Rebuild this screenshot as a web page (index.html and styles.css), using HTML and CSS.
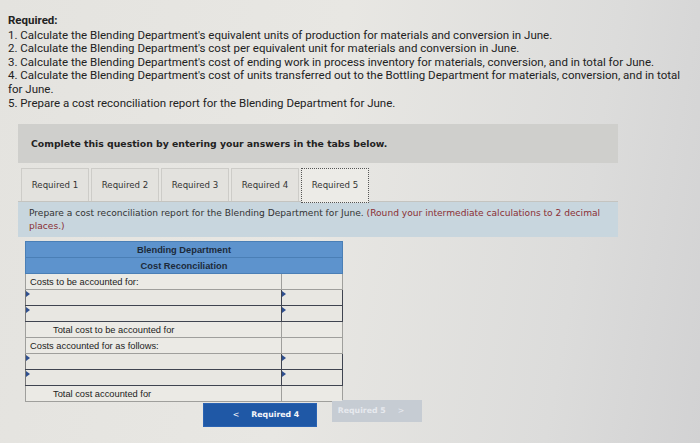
FILE: index.html
```html
<!DOCTYPE html>
<html>
<head>
<meta charset="utf-8">
<link rel="stylesheet" href="styles.css">
</head>
<body>
<div class="page">
  <div class="req">
    <div class="req-title">Required:</div>
    <div>1. Calculate the Blending Department's equivalent units of production for materials and conversion in June.</div>
    <div>2. Calculate the Blending Department's cost per equivalent unit for materials and conversion in June.</div>
    <div>3. Calculate the Blending Department's cost of ending work in process inventory for materials, conversion, and in total for June.</div>
    <div>4. Calculate the Blending Department's cost of units transferred out to the Bottling Department for materials, conversion, and in total for June.</div>
    <div>5. Prepare a cost reconciliation report for the Blending Department for June.</div>
  </div>

  <div class="card">
    <div class="banner">Complete this question by entering your answers in the tabs below.</div>
    <div class="tabs">
      <div class="tab">Required 1</div>
      <div class="tab">Required 2</div>
      <div class="tab">Required 3</div>
      <div class="tab">Required 4</div>
      <div class="tab active">Required 5</div>
    </div>
    <div class="panel">
      <div class="pline">Prepare a cost reconciliation report for the Blending Department for June. <span class="note">(Round your intermediate calculations to 2 decimal</span></div>
      <div class="pline note">places.)</div>
    </div>

    <table class="recon">
      <tr class="head"><td colspan="2">Blending Department</td></tr>
      <tr class="head"><td colspan="2">Cost Reconciliation</td></tr>
      <tr class="row"><td class="lbl">Costs to be accounted for:</td><td class="val"></td></tr>
      <tr class="inp"><td class="lbl"><span class="mark"></span></td><td class="val"><span class="mark"></span></td></tr>
      <tr class="inp"><td class="lbl"><span class="mark"></span></td><td class="val"><span class="mark"></span></td></tr>
      <tr class="row"><td class="lbl ind">Total cost to be accounted for</td><td class="val"></td></tr>
      <tr class="row"><td class="lbl">Costs accounted for as follows:</td><td class="val"></td></tr>
      <tr class="inp"><td class="lbl"><span class="mark"></span></td><td class="val"><span class="mark"></span></td></tr>
      <tr class="inp"><td class="lbl"><span class="mark"></span></td><td class="val"><span class="mark"></span></td></tr>
      <tr class="row"><td class="lbl ind">Total cost accounted for</td><td class="val"></td></tr>
    </table>

    <div class="nav">
      <div class="btn prev"><span class="chev">&lt;</span>Required 4</div>
      <div class="btn next">Required 5<span class="chev">&gt;</span></div>
    </div>
  </div>
</div>
</body>
</html>
```
FILE: styles.css
```css
html, body {
  margin: 0;
  padding: 0;
}
body {
  width: 700px;
  height: 443px;
  overflow: hidden;
  background: linear-gradient(100deg, #e4e3df 0%, #e8e7e3 45%, #dcdcdb 80%, #d2d2d3 100%);
}
.page {
  padding: 14px 0 0 8px;
}
.req {
  font-family: Roboto, "Liberation Sans", sans-serif;
  font-size: 11.5px;
  line-height: 13.6px;
  color: #222;
  width: 680px;
}
.req-title {
  font-weight: bold;
  margin-bottom: 1px;
}
.card {
  margin: 14px 0 0 10px;
  width: 600px;
}
.banner {
  background: #cfcfcc;
  height: 39px;
  line-height: 39px;
  padding-left: 13px;
  font-family: "DejaVu Sans", Verdana, sans-serif;
  font-weight: bold;
  font-size: 9.3px;
  color: #222;
}
.tabs {
  display: flex;
  gap: 2px;
  margin-top: 5px;
  padding-left: 3px;
  height: 33px;
  border-bottom: 1px solid #c4c4c0;
}
.tab {
  width: 66px;
  height: 32px;
  line-height: 32px;
  text-align: center;
  background: #e3e2de;
  border: 1px solid #cdccc8;
  border-bottom: none;
  font-family: "DejaVu Sans", Verdana, sans-serif;
  font-size: 8.6px;
  color: #333;
}
.tab.active {
  background: #ecebe7;
  border: 1px dotted #555;
  height: 33px;
}
.panel {
  background: #c8d6de;
  height: 26px;
  padding: 5px 11px 4px;
  font-family: "DejaVu Sans", Verdana, sans-serif;
  font-size: 9.1px;
  line-height: 13px;
  color: #333;
}
.pline {
  white-space: nowrap;
}
.note {
  color: #8a2f35;
}
.recon {
  margin: 4px 0 0 7px;
  border-collapse: collapse;
  width: 318px;
  font-family: "Liberation Sans", Arial, sans-serif;
  font-size: 9.3px;
  color: #222;
}
.recon td {
  padding: 0 4px;
  height: 15px;
  position: relative;
}
.head td {
  background: #5d93cd;
  text-align: center;
  font-weight: bold;
  border: 1px solid #4a7fb6;
  color: #1c2a3a;
}
.row td {
  background: #ebeae5;
  border: 1px solid #9f9f9c;
}
.row .val {
  width: 52px;
}
.lbl.ind {
  padding-left: 27px;
}
.inp td {
  background: #e8e7e2;
  border: 1.5px solid #3f4450;
}
.inp .lbl {
  border-left-color: #777;
}
.mark {
  position: absolute;
  left: 0;
  top: 1px;
  width: 0;
  height: 0;
  border-top: 3px solid transparent;
  border-bottom: 3px solid transparent;
  border-left: 4px solid #2f4f8f;
}
.nav {
  display: flex;
  gap: 15px;
  margin-top: 1px;
  padding-left: 185px;
}
.btn {
  height: 22px;
  line-height: 22px;
  width: 112px;
  text-align: center;
  font-family: "DejaVu Sans", Verdana, sans-serif;
  font-weight: bold;
  font-size: 7.8px;
}
.btn.prev {
  background: #1f58a6;
  color: #f4f6fa;
  border: 1px solid #2a63b3;
}
.btn.next {
  background: #c6ccd3;
  color: #e6e9ee;
  width: 90px;
  margin-top: -3px;
}
.chev {
  font-weight: normal;
  margin: 0 12px;
}
```
